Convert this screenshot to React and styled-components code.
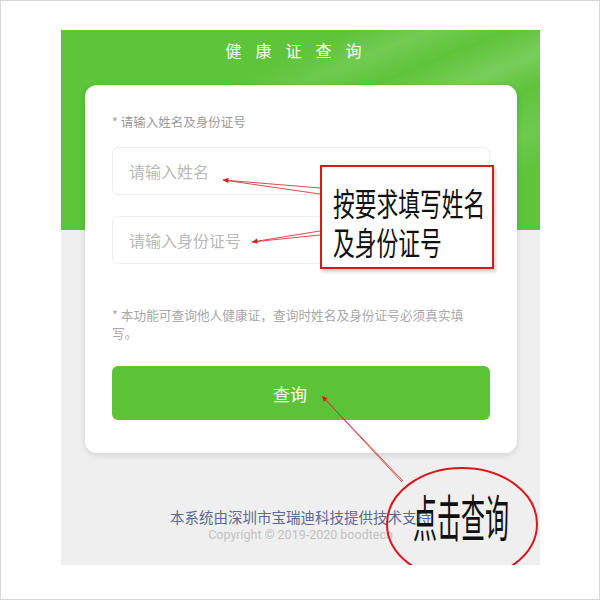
import React from 'react'
import styled, { createGlobalStyle } from 'styled-components'

const GREEN = '#5ec43a'

const GlobalStyle = createGlobalStyle`
  html, body {
    margin: 0;
    padding: 0;
    background: #fff;
  }
  body {
    font-family: 'Noto Sans CJK SC', 'Noto Sans', sans-serif;
  }
`

const Frame = styled.div`
  width: 600px;
  height: 600px;
  box-sizing: border-box;
  border: 1px solid #d6d6d6;
  padding: 29px 0 0 60px;
  background: #fff;
`

const Screen = styled.div`
  position: relative;
  width: 479px;
  height: 535px;
  overflow: hidden;
  background: #efefef;
`

const Header = styled.header`
  height: 200px;
  box-sizing: border-box;
  padding-top: 10px;
  text-align: center;
  background:
    linear-gradient(90deg, ${GREEN} 28%, rgba(94, 196, 58, 0) 62%),
    linear-gradient(
      158deg,
      transparent 30%,
      rgba(255, 255, 255, 0.13) 38%,
      transparent 46%,
      rgba(255, 255, 255, 0.16) 55%,
      transparent 63%,
      rgba(255, 255, 255, 0.1) 74%,
      transparent 84%
    ),
    ${GREEN};
`

const Title = styled.h1`
  margin: 0;
  font-size: 16px;
  line-height: 20px;
  font-weight: 400;
  color: #fff;
  letter-spacing: 14px;
`

const Card = styled.section`
  margin: -145px 23px 0 24px;
  padding: 29px 27px 33px;
  background: #fff;
  border-radius: 12px;
  box-shadow: 0 2px 6px rgba(0, 0, 0, 0.13);
  display: flex;
  flex-direction: column;
`

const Label = styled.div`
  font-size: 12.5px;
  line-height: 16px;
  color: #9a9a9a;
  margin-bottom: 17px;
`

const Input = styled.input`
  box-sizing: border-box;
  width: 100%;
  height: 48px;
  margin-bottom: ${(p) => p.$gap}px;
  padding: 0 16px;
  border: 1px solid #ededed;
  border-radius: 6px;
  font-family: inherit;
  font-size: 16px;
  outline: none;
  &::placeholder {
    color: #b9b9b9;
  }
`

const Note = styled.p`
  margin: 0 0 24px;
  padding-right: 20px;
  font-size: 12.7px;
  line-height: 18px;
  color: #a8a8a8;
`

const Button = styled.button`
  height: 54px;
  padding: 0 22px 0 0;
  border: none;
  border-radius: 6px;
  background: #5cc337;
  color: #fff;
  font-family: inherit;
  font-size: 17px;
`

const Footer = styled.footer`
  margin-top: 55px;
  text-align: center;
`

const Support = styled.div`
  font-size: 14.5px;
  line-height: 18px;
  color: #5a6a92;
`

const Copyright = styled.div`
  font-family: Roboto, 'Liberation Sans', sans-serif;
  font-size: 12.5px;
  line-height: 17px;
  color: #c2c2c2;
`

const Marks = styled.svg`
  position: absolute;
  left: 0;
  top: 0;
  pointer-events: none;
`

const NoteBox = styled.div`
  position: absolute;
  left: 259px;
  top: 135px;
  width: 174px;
  height: 104px;
  box-sizing: border-box;
  padding: 16px 0 0 11px;
  border: 2px solid #d8181c;
  background: #fff;
  box-shadow: 2px 3px 3px rgba(0, 0, 0, 0.18);
`

const Hand = styled.div`
  font-size: ${(p) => p.$size}px;
  line-height: ${(p) => p.$line}px;
  font-weight: 400;
  color: #111;
  white-space: nowrap;
  transform: scaleX(${(p) => p.$squeeze});
  transform-origin: left center;
`

const ClickLabel = styled.div`
  position: absolute;
  left: 352px;
  top: 457px;
`

function Arrow({ head, tails }) {
  const [hx, hy] = head
  const [tx, ty] = tails[0]
  const a = Math.atan2(hy - ty, hx - tx)
  const s = 6
  const p1 = [hx - s * Math.cos(a - 0.45), hy - s * Math.sin(a - 0.45)]
  const p2 = [hx - s * Math.cos(a + 0.45), hy - s * Math.sin(a + 0.45)]
  return (
    <g>
      {tails.map(([x, y], i) => (
        <line key={i} x1={x} y1={y} x2={hx} y2={hy} stroke="#d23a3a" strokeWidth="0.9" />
      ))}
      <polygon points={`${hx},${hy} ${p1.join(',')} ${p2.join(',')}`} fill="#d8181c" />
    </g>
  )
}

export default function App() {
  return (
    <>
      <GlobalStyle />
      <Frame>
        <Screen>
          <Header>
            <Title>健康证查询</Title>
          </Header>
          <Card>
            <Label>* 请输入姓名及身份证号</Label>
            <Input $gap={21} placeholder="请输入姓名" />
            <Input $gap={42} placeholder="请输入身份证号" />
            <Note>* 本功能可查询他人健康证，查询时姓名及身份证号必须真实填写。</Note>
            <Button>查询</Button>
          </Card>
          <Footer>
            <Support>本系统由深圳市宝瑞迪科技提供技术支持</Support>
            <Copyright>Copyright © 2019-2020 boodtech</Copyright>
          </Footer>

          <Marks width="479" height="535" viewBox="0 0 479 535">
            <Arrow head={[162, 150]} tails={[[259, 158], [259, 164]]} />
            <Arrow head={[191, 212]} tails={[[259, 201], [259, 205]]} />
            <Arrow head={[261, 366]} tails={[[341, 452], [342, 451]]} />
            <ellipse cx="401" cy="494" rx="75" ry="56" fill="none" stroke="#d8181c" strokeWidth="2" />
          </Marks>
          <NoteBox>
            <Hand $size={32} $line={39} $squeeze={0.68}>按要求填写姓名</Hand>
            <Hand $size={32} $line={39} $squeeze={0.68}>及身份证号</Hand>
          </NoteBox>
          <ClickLabel>
            <Hand $size={50} $line={56} $squeeze={0.48}>点击查询</Hand>
          </ClickLabel>
        </Screen>
      </Frame>
    </>
  )
}
